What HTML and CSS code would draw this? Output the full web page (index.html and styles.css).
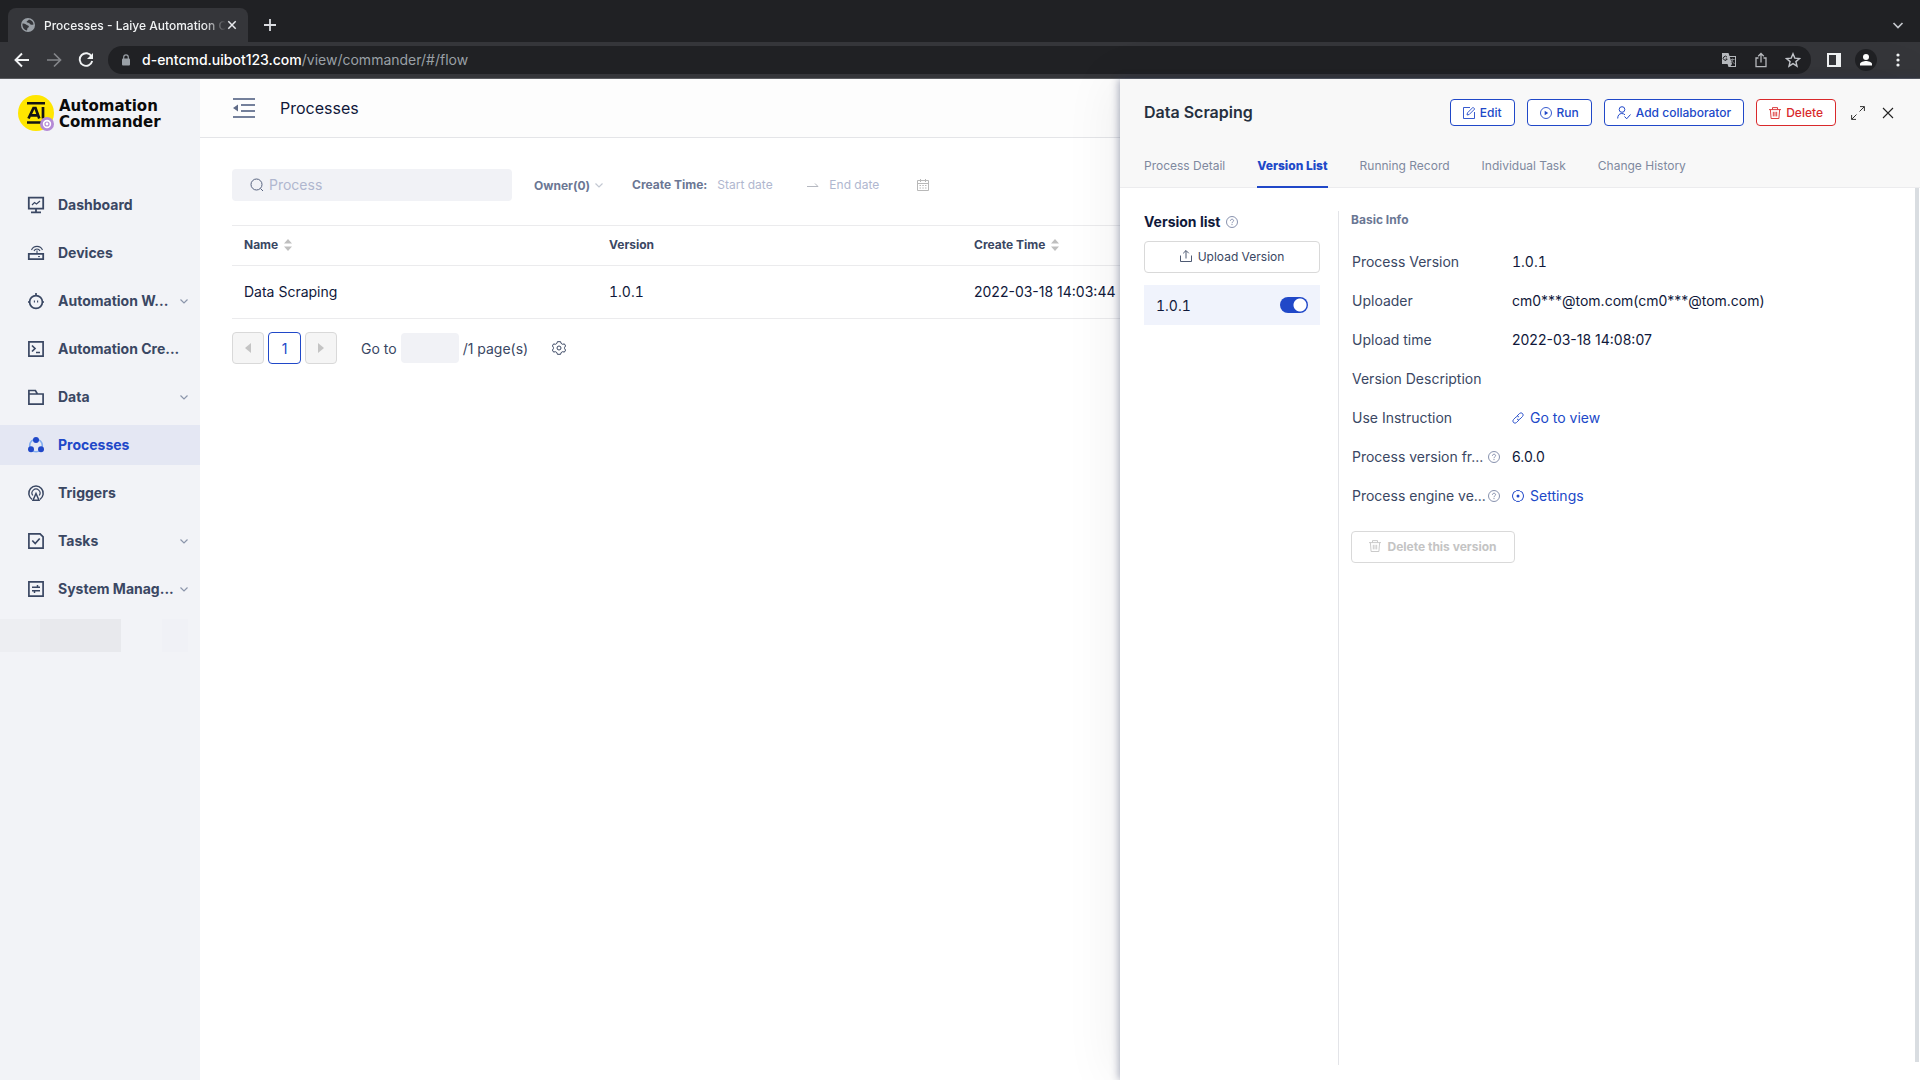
FILE: index.html
```
<!DOCTYPE html>
<html lang="en">
<head>
  <meta charset="UTF-8">
  <meta name="viewport" content="width=device-width, initial-scale=1">
  <title>Processes - Laiye Automation Commander</title>
  <link rel="stylesheet" href="styles.css">
</head>
<body>
  <svg class="sprite" aria-hidden="true">
    <symbol id="chevron" viewBox="0 0 8 8"><path d="M.5 2.500l3.500 3.500 3.500-3.500" fill="none" stroke="currentColor" stroke-width="1.200"/></symbol>
    <symbol id="help" viewBox="0 0 12 12"><g fill="none" stroke="currentColor" stroke-width=".9"><circle cx="6" cy="6" r="5.500"/><path d="M4.400 4.800C4.400 2.700 7.600 2.700 7.600 4.700 7.600 5.800 6 5.800 6 7.200"/></g><circle cx="6" cy="8.600" r=".6" fill="currentColor"/></symbol>
    <symbol id="trash" viewBox="0 0 12 12"><path d="M0 2.600h12M3.500 2.400V.6h5v1.800M1.400 2.800l.7 8.700h7.800l.7-8.700M4.300 4.800v4.600M6 4.800v4.600M7.700 4.800v4.600" fill="none" stroke="currentColor" stroke-width=".9"/></symbol>
    <symbol id="sort" viewBox="0 0 8 14"><path d="M0 5.500L4 1l4 4.500zM0 8.500h8L4 13z" fill="#bfbfbf"/></symbol>
    <symbol id="gear" viewBox="0 0 14 14"><g fill="none" stroke="currentColor"><path d="M5.400.7h3.200l.5 1.700 1.500.9 1.800-.4 1.200 2-1 1.400v1.400l1 1.400-1.200 2-1.800-.4-1.500.9-.5 1.700H5.400l-.5-1.700-1.500-.9-1.800.4-1.200-2 1-1.400V6.300l-1-1.400 1.200-2 1.800.4 1.500-.9z"/><circle cx="7" cy="7" r="2"/></g></symbol>
  </svg>

  <div class="tabbar">
    <div class="tab">
      <svg width="14" height="14" viewBox="0 0 14 14"><circle cx="7" cy="7" r="7" fill="#9aa0a6"/><path d="M1.500 5.500C4 5 5 7 7 7.500c1.500.5 1 2-.5 2.500L6 12.500C3 12 1 9 1.500 5.500zM8 1.500c-1 1.500-2 1-2.500 2.500 1 1 3 .5 3.500 2 1 1 2 1 3.500.5C12.500 4 10.500 2 8 1.500z" fill="#35363a"/></svg>
      <span class="tab-title">Processes - Laiye Automation C</span>
      <button class="tab-close" aria-label="Close tab"><svg width="10" height="10" viewBox="0 0 10 10"><path d="M1.300 1.300l7.400 7.400M8.700 1.300L1.300 8.700" stroke="#e8eaed" stroke-width="1.500"/></svg></button>
    </div>
    <button aria-label="New tab"><svg width="14" height="14" viewBox="0 0 14 14"><path d="M7 1v12M1 7h12" stroke="#dadce0" stroke-width="1.800"/></svg></button>
    <button class="tab-menu" aria-label="Search tabs"><svg width="12" height="12" viewBox="0 0 12 12"><path d="M1.500 4L6 8.500 10.500 4" fill="none" stroke="#c4c7cc" stroke-width="1.700"/></svg></button>
  </div>

  <div class="toolbar">
    <button aria-label="Back"><svg width="16" height="16" viewBox="0 0 16 16"><path d="M15 8H2M8 1.500L1.500 8 8 14.500" fill="none" stroke="#f1f3f4" stroke-width="1.900"/></svg></button>
    <button aria-label="Forward"><svg width="16" height="16" viewBox="0 0 16 16"><path d="M1 8h13M8 1.500L14.500 8 8 14.500" fill="none" stroke="#84868a" stroke-width="1.700"/></svg></button>
    <button aria-label="Reload"><svg width="16" height="16" viewBox="0 0 16 16"><path d="M13.600 4.500A6.300 6.300 0 1 0 14.200 9" fill="none" stroke="#f1f3f4" stroke-width="1.900"/><path d="M15 1v6H9z" fill="#f1f3f4"/></svg></button>
    <div class="omnibox">
      <svg width="10" height="12" viewBox="0 0 10 12"><rect x="1" y="4.500" width="8" height="7" rx="1" fill="#9aa0a6"/><path d="M2.700 5V3.200a2.300 2.300 0 0 1 4.600 0V5" fill="none" stroke="#9aa0a6" stroke-width="1.200"/></svg>
      <div class="url" role="textbox" contenteditable="true" spellcheck="false" aria-label="Address">d-entcmd.uibot123.com<span class="path">/view/commander/#/flow</span></div>
      <button aria-label="Translate"><svg width="16" height="16" viewBox="0 0 16 16"><path d="M1 1h6.500l1 3H15v11H7.500l-1-3H1z" fill="#b8bbbf"/><path d="M8.800 5H14v9H9.600L11 12z" fill="#202124"/><path d="M9.600 7.500h4M11.600 6.500v1c0 1.500-1 2.500-2 3M10.500 8.500c.5 1.500 1.500 2 3 3" fill="none" stroke="#8a8d91"/><path d="M6 5.200A2 2 0 1 0 6.200 7H4.600" fill="none" stroke="#202124"/></svg></button>
      <button aria-label="Share"><svg width="16" height="16" viewBox="0 0 16 16"><path d="M5.500 6H3v8.700h10V6h-2.500M8 10.500V1.800M5.200 4.300L8 1.500l2.800 2.800" fill="none" stroke="#b8bbbf" stroke-width="1.300"/></svg></button>
      <button aria-label="Bookmark"><svg width="16" height="16" viewBox="0 0 16 16"><path d="M8 1.800l1.800 4.300 4.700.4-3.600 3.100 1.100 4.600-4-2.500-4 2.500 1.100-4.600-3.600-3.100 4.700-.4z" fill="none" stroke="#c4c7cc" stroke-width="1.400"/></svg></button>
    </div>
    <div class="tools">
      <button aria-label="Side panel"><svg width="14" height="14" viewBox="0 0 14 14"><path d="M0 0h14v14H0zM2 2v10h7V2z" fill="#f1f3f4" fill-rule="evenodd"/></svg></button>
      <button aria-label="Profile"><svg width="22" height="22" viewBox="0 0 22 22"><circle cx="11" cy="11" r="11" fill="#202124"/><circle cx="11" cy="8" r="3" fill="#fff"/><path d="M5 16.500v-1.500c0-2 4-3 6-3s6 1 6 3v1.500z" fill="#fff"/></svg></button>
      <button class="dots" aria-label="Menu"><svg width="4" height="14" viewBox="0 0 4 14"><g fill="#f1f3f4"><circle cx="2" cy="2" r="1.600"/><circle cx="2" cy="7" r="1.600"/><circle cx="2" cy="12" r="1.600"/></g></svg></button>
    </div>
  </div>

  <div class="app">
    <aside class="sidebar">
      <div class="logo">
        <svg width="37" height="37" viewBox="0 0 37 37"><circle cx="18" cy="18" r="18" fill="#ffe600"/><path d="M9 8.200h18M9 27.500h14" stroke="#141414" stroke-width="2.600"/><path d="M10.500 23.500L15.500 13h2l3.800 10.500M13 20.300h6.500M25 12v11.500" fill="none" stroke="#141414" stroke-width="2.700"/><circle cx="29" cy="29" r="7" fill="#b48ad6"/><circle cx="29" cy="29" r="3.400" fill="none" stroke="#fff" stroke-width="1.600"/><circle cx="29" cy="29" r="1.400" fill="#fff"/></svg>
        <div class="logo-text">Automation<br>Commander</div>
      </div>
      <nav class="nav">
        <a href="#"><svg width="18" height="18" viewBox="0 0 18 18"><g fill="none" stroke="currentColor" stroke-width="1.800"><path d="M1.800 1.700h14.400v11H1.800zM9 13v3M4 16.400h10"/><path d="M5 9l2.500-2.500 2 1.500L13 5" stroke-width="1.200"/></g></svg><span>Dashboard</span></a>
        <a href="#"><svg width="18" height="18" viewBox="0 0 18 18"><g fill="none" stroke="currentColor" stroke-width="1.800"><path d="M1.800 9.900h14.400v5.300H1.800z"/><path d="M10 9V6.500M4.500 6a6 6 0 0 1 11 0M7 7a3.300 3.300 0 0 1 6 0" stroke-width="1.100"/><path d="M11 12.600h2" stroke-width="1"/></g></svg><span>Devices</span></a>
        <a href="#"><svg width="18" height="18" viewBox="0 0 18 18"><g fill="none" stroke="currentColor" stroke-width="1.700"><circle cx="9" cy="10" r="6.400"/><path d="M9 1v3M1 10h2M15 10h2"/><path d="M7.400 8.500v2M10.600 8.500v2" stroke-width="1.100"/></g></svg><span>Automation W...</span><svg class="chev" width="8" height="8"><use href="#chevron"/></svg></a>
        <a href="#"><svg width="18" height="18" viewBox="0 0 18 18"><g fill="none" stroke="currentColor" stroke-width="1.700"><path d="M1.900 1.900h14.200v14.200H1.900zM5 5.500l3 3-3 3M9 12.500h4"/></g></svg><span>Automation Cre...</span></a>
        <a href="#"><svg width="18" height="18" viewBox="0 0 18 18"><path d="M1.900 16.100V2.500h6.500l2 3.500h5.700v10.100zM2 6h9" fill="none" stroke="currentColor" stroke-width="1.700"/></svg><span>Data</span><svg class="chev" width="8" height="8"><use href="#chevron"/></svg></a>
        <a href="#" class="active" aria-current="page"><svg width="18" height="18" viewBox="0 0 18 18"><circle cx="9" cy="9.500" r="6.300" fill="none" stroke="#82aef0" stroke-width="1.600"/><g fill="currentColor"><circle cx="9" cy="4" r="3"/><circle cx="4" cy="13.200" r="3"/><circle cx="14" cy="13.200" r="3"/></g></svg><span>Processes</span></a>
        <a href="#"><svg width="18" height="18" viewBox="0 0 18 18"><g fill="none" stroke="currentColor" stroke-width="1.500"><path d="M5 15.300a7.200 7.200 0 1 1 8 0"/><path d="M5.800 11.500a4 4 0 1 1 6.400 0" stroke-width="1.200"/><path d="M9 9.500l-3 6.700h6z"/></g></svg><span>Triggers</span></a>
        <a href="#"><svg width="18" height="18" viewBox="0 0 18 18"><path d="M1.900 1.900h11.200l3 3v11.200H1.900zM5.300 8.500l2.900 3 4.500-5" fill="none" stroke="currentColor" stroke-width="1.700"/></svg><span>Tasks</span><svg class="chev" width="8" height="8"><use href="#chevron"/></svg></a>
        <a href="#"><svg width="18" height="18" viewBox="0 0 18 18"><g fill="none" stroke="currentColor" stroke-width="1.700"><path d="M1.900 1.900h14.200v14.200H1.900z"/><path d="M5 7.200h8M10.500 5v2.200M5 10.800h8M7.500 10.800V13" stroke-width="1.500"/></g></svg><span>System Manag...</span><svg class="chev" width="8" height="8"><use href="#chevron"/></svg></a>
      </nav>
      <div class="masked"><i class="pale"></i><i class="dark"></i><i class="faint"></i></div>
    </aside>

    <main class="main">
      <header class="page-head">
        <button aria-label="Collapse menu"><svg width="22" height="20" viewBox="0 0 22 20"><path d="M0 1h22M8 7h14M8 13h14M0 19h22" stroke="#74809b" stroke-width="1.900"/><path d="M5 6.500v7L0 10z" fill="#5f6b87"/></svg></button>
        <h1>Processes</h1>
      </header>
      <section class="content">
        <div class="filters">
          <label class="search">
            <svg width="14" height="14" viewBox="0 0 14 14"><circle cx="6.500" cy="6.500" r="5.500" fill="none" stroke="#57637f"/><path d="M10.500 10.500L13 13" stroke="#57637f"/></svg>
            <input type="text" placeholder="Process" aria-label="Process">
          </label>
          <label class="owner">
            <select aria-label="Owner"><option>Owner(0)</option></select>
            <svg width="8" height="8"><use href="#chevron"/></svg>
          </label>
          <div class="dates">
            <label for="start">Create Time:</label>
            <input id="start" type="text" placeholder="Start date">
            <svg width="12" height="8" viewBox="0 0 12 8"><path d="M0 5.500h11L8 2.500" fill="none" stroke="#b5b8c0"/></svg>
            <input type="text" placeholder="End date" aria-label="End date">
            <svg width="12" height="12" viewBox="0 0 12 12"><path d="M.5 1.500h11v10H.5zM.5 4.500h11M3.500 0v3M8.500 0v3M2.500 6.500H4M5.300 6.500h1.500M8 6.500h1.500M2.500 9H4M5.300 9h1.500M8 9h1.500" fill="none" stroke="#b8b8b8"/></svg>
          </div>
        </div>
        <table>
          <colgroup><col class="col"><col class="col"><col class="col"><col></colgroup>
          <thead>
            <tr>
              <th>Name <svg class="sort" width="8" height="14"><use href="#sort"/></svg></th>
              <th>Version</th>
              <th>Create Time <svg class="sort" width="8" height="14"><use href="#sort"/></svg></th>
              <th></th>
            </tr>
          </thead>
          <tbody>
            <tr><td>Data Scraping</td><td class="num">1.0.1</td><td>2022-03-18 14:03:44</td><td></td></tr>
          </tbody>
        </table>
        <div class="pager">
          <button disabled aria-label="Previous page"><svg width="6" height="10" viewBox="0 0 6 10"><path d="M6 0v10L0 5z" fill="#c4c4c4"/></svg></button>
          <button class="current">1</button>
          <button disabled aria-label="Next page"><svg width="6" height="10" viewBox="0 0 6 10"><path d="M0 0v10l6-5z" fill="#c4c4c4"/></svg></button>
          <label for="goto">Go to</label>
          <input id="goto" type="text">
          <span>/1 page(s)</span>
          <a href="#" aria-label="Table settings"><svg width="14" height="14"><use href="#gear"/></svg></a>
        </div>
      </section>
    </main>

    <section class="drawer">
      <header class="drawer-head">
        <div class="drawer-title">
          <h2>Data Scraping</h2>
          <button class="btn"><svg width="12" height="12" viewBox="0 0 12 12"><path d="M7 .5H.5v11h11V5M4 8l.5-2.200L10 .3l1.700 1.700L6.200 7.500z" fill="none" stroke="currentColor" stroke-width=".9"/></svg>Edit</button>
          <button class="btn"><svg width="12" height="12" viewBox="0 0 12 12"><circle cx="6" cy="6" r="5.500" fill="none" stroke="currentColor" stroke-width=".9"/><path d="M4.700 3.800v4.400L8.200 6z" fill="currentColor"/></svg>Run</button>
          <button class="btn"><svg width="14" height="14" viewBox="0 0 14 14"><path d="M.7 12.500c0-3 1.500-5 4-5 1.500 0 2.500.5 3.300 1.300M7.500 10.500l2.200 2.300L13.500 8.500" fill="none" stroke="currentColor"/><circle cx="5" cy="3.500" r="2.800" fill="none" stroke="currentColor"/></svg>Add collaborator</button>
          <button class="btn danger"><svg width="12" height="12"><use href="#trash"/></svg>Delete</button>
          <button class="expand" aria-label="Expand"><svg width="14" height="14" viewBox="0 0 14 14"><path d="M8.500 5.500L13.300.7M9 .6h4.400V5M5.500 8.500L.7 13.300M.6 9v4.400H5" fill="none" stroke="#333"/></svg></button>
          <button aria-label="Close"><svg width="12" height="12" viewBox="0 0 12 12"><path d="M1 1l10 10M11 1L1 11" stroke="#222" stroke-width="1.100"/></svg></button>
        </div>
        <div class="tabs" role="tablist">
          <button role="tab">Process Detail</button>
          <button role="tab" class="on" aria-selected="true">Version List</button>
          <button role="tab">Running Record</button>
          <button role="tab">Individual Task</button>
          <button role="tab">Change History</button>
        </div>
      </header>
      <div class="drawer-body">
        <div class="versions">
          <h3>Version list <svg width="12" height="12"><use href="#help"/></svg></h3>
          <button class="upload"><svg width="12" height="12" viewBox="0 0 12 12"><path d="M.5 5.500v6h11v-6M6 8.500V.8M3.200 3.300L6 .5l2.800 2.800" fill="none" stroke="currentColor" stroke-width=".9"/></svg>Upload Version</button>
          <label class="version num">1.0.1 <input type="checkbox" checked></label>
        </div>
        <div class="info">
          <h4>Basic Info</h4>
          <dl>
            <div><dt>Process Version</dt><dd class="num">1.0.1</dd></div>
            <div><dt>Uploader</dt><dd>cm0***@tom.com(cm0***@tom.com)</dd></div>
            <div><dt>Upload time</dt><dd>2022-03-18 14:08:07</dd></div>
            <div><dt>Version Description</dt><dd></dd></div>
            <div><dt>Use Instruction</dt><dd><a href="#"><svg width="12" height="12" viewBox="0 0 12 12"><path d="M5 4l2.500-2.500a2 2 0 0 1 3 3L8 7a2 2 0 0 1-3 0M7 8l-2.500 2.500a2 2 0 0 1-3-3L4 5a2 2 0 0 1 3 0" fill="none" stroke="currentColor" stroke-width=".9"/></svg>Go to view</a></dd></div>
            <div><dt>Process version fr... <svg width="12" height="12"><use href="#help"/></svg></dt><dd>6.0.0</dd></div>
            <div><dt>Process engine ve... <svg width="12" height="12"><use href="#help"/></svg></dt><dd><a href="#"><svg width="12" height="12" viewBox="0 0 12 12"><path d="M4.500.6h3l1 .9 1.700.6L11.400 5v2l-1.200 2.900-1.700.6-1 .9h-3l-1-.9-1.700-.6L.6 7V5l1.200-2.900 1.700-.6z" fill="none" stroke="currentColor"/><circle cx="6" cy="6" r="1.500" fill="currentColor"/></svg>Settings</a></dd></div>
          </dl>
          <button class="remove" disabled><svg width="12" height="12"><use href="#trash"/></svg>Delete this version</button>
        </div>
        <div class="scrollbar"></div>
      </div>
    </section>
  </div>
</body>
</html>
```
FILE: styles.css
```
* {
  box-sizing: border-box;
}
body {
  margin: 0;
  height: 100vh;
  display: flex;
  flex-direction: column;
  overflow: hidden;
  font-family: Inter, "Liberation Sans", sans-serif;
  font-size: 14px;
  color: #10183a;
  background: #fff;
}
h1, h2, h3, h4, dl, dd {
  margin: 0;
}
button, input, select {
  font: inherit;
  color: inherit;
  border: none;
  background: none;
  padding: 0;
  margin: 0;
}
button {
  display: flex;
  align-items: center;
  justify-content: center;
}
a {
  color: inherit;
  text-decoration: none;
}
svg {
  flex: none;
}
.num {
  font-variant-numeric: tabular-nums;
}
.sprite {
  position: absolute;
  width: 0;
  height: 0;
}

/* browser */
.tabbar {
  display: flex;
  align-items: center;
  height: 42px;
  padding: 0 16px 0 8px;
  background: #202124;
}
.tabbar button {
  margin-top: 8px;
}
.tab {
  display: flex;
  align-items: center;
  align-self: flex-end;
  width: 240px;
  height: 34px;
  margin-right: 15px;
  padding: 0 11px 0 13px;
  border-radius: 8px 8px 0 0;
  background: #35363a;
}
.tab-title {
  flex: 1;
  min-width: 0;
  margin: 0 0 0 9px;
  white-space: nowrap;
  font-size: 12px;
  font-weight: 500;
  color: #f1f3f4;
  mask-image: linear-gradient(to right, #000 160px, transparent 182px);
}
.tabbar .tab-close {
  margin-top: 0;
}
.tabbar .tab-menu {
  margin-left: auto;
}
.toolbar {
  display: flex;
  align-items: center;
  height: 37px;
  gap: 16px;
  padding: 0 20px 1px 14px;
  background: #35363a;
  border-bottom: 1px solid #5a5c60;
}
.omnibox {
  flex: 1;
  display: flex;
  align-items: center;
  gap: 16px;
  height: 28px;
  margin-left: -2px;
  padding: 0 10px 0 13px;
  border-radius: 14px;
  background: #202124;
}
.url {
  flex: 1;
  margin-left: -5px;
  font-weight: 500;
  color: #fff;
  outline: none;
}
.path {
  font-weight: 400;
  color: #9aa0a6;
}
.tools {
  display: flex;
  align-items: center;
  gap: 14px;
}
.tools .dots {
  margin-left: 5px;
}

/* page */
.app {
  position: relative;
  flex: 1;
  display: flex;
  min-height: 0;
}
.sidebar {
  width: 200px;
  background: #f2f3f7;
}
.logo {
  display: flex;
  align-items: center;
  gap: 4px;
  padding: 16px 0 0 18px;
}
.logo-text {
  font-family: "DejaVu Sans", sans-serif;
  font-size: 15px;
  line-height: 16px;
  font-weight: bold;
  color: #0a0a0a;
}
.nav {
  display: flex;
  flex-direction: column;
  gap: 8px;
  margin-top: 53px;
}
.nav a {
  display: flex;
  align-items: center;
  height: 40px;
  padding: 0 12px 0 27px;
  font-weight: 700;
  color: #3a4763;
}
.nav span {
  flex: 1;
  margin-left: 13px;
  padding-bottom: 1px;
  white-space: nowrap;
}
.nav .chev {
  color: #8c96ab;
}
.nav .active {
  background: #e4e7f3;
  color: #2048c8;
}
.masked {
  display: flex;
  margin-top: 10px;
  height: 33px;
}
.masked .pale {
  width: 40px;
  background: #edeef2;
}
.masked .dark {
  width: 81px;
  background: #e8e9ed;
}
.masked .faint {
  width: 26px;
  margin-left: 41px;
  background: #f0f1f6;
}
.main {
  flex: 1;
  min-width: 0;
}
.page-head {
  display: flex;
  align-items: center;
  gap: 25px;
  height: 59px;
  padding-left: 33px;
  border-bottom: 1px solid #e4e5e8;
  background: #fdfdfd;
}
.page-head h1 {
  font-size: 16px;
  font-weight: 400;
}
.content {
  padding: 31px 32px;
}
.filters {
  display: flex;
  align-items: center;
  font-size: 12px;
}
.search {
  display: flex;
  align-items: center;
  gap: 5px;
  width: 280px;
  height: 32px;
  padding-left: 18px;
  border-radius: 4px;
  background: #f1f2f6;
  font-size: 14px;
}
.filters input, .dates label {
  padding-bottom: 2px;
}
::placeholder {
  color: #b0b7cf;
  opacity: 1;
}
.owner {
  display: flex;
  align-items: center;
  gap: 4px;
  margin: 0 29px 0 22px;
  color: #c3c8d2;
}
.owner select {
  appearance: none;
  font-weight: 700;
  color: #6b7794;
}
.dates {
  display: flex;
  align-items: center;
}
.dates label {
  margin-right: 10px;
  font-weight: 700;
  color: #6b7794;
}
.dates input {
  width: 80px;
  margin-right: 10px;
}
.dates svg {
  margin-right: 10px;
}
.dates input:last-of-type {
  width: 78px;
}
table {
  width: 100%;
  margin-top: 24px;
  border-collapse: collapse;
  table-layout: fixed;
  border-top: 1px solid #ebebed;
}
.col {
  width: 365px;
}
th, td {
  padding: 0 12px 2px;
  text-align: left;
  border-bottom: 1px solid #ebebed;
  white-space: nowrap;
}
th {
  height: 40px;
  font-size: 12px;
  font-weight: 700;
  color: #3a4763;
}
td {
  height: 53px;
}
.sort {
  margin-left: 3px;
  vertical-align: middle;
}
.pager {
  display: flex;
  align-items: center;
  gap: 4px;
  margin-top: 13px;
  color: #3a4763;
}
.pager button {
  width: 32px;
  height: 32px;
  border: 1px solid #d9d9d9;
  border-radius: 4px;
  background: #f5f5f5;
}
.pager .current {
  width: 33px;
  border-color: #2048c8;
  background: #fff;
  color: #2048c8;
}
.pager label {
  margin-left: 20px;
}
.pager input {
  width: 58px;
  height: 30px;
  border-radius: 4px;
  background: #f1f2f6;
}
.pager a {
  display: flex;
  margin-left: 20px;
}

/* drawer */
.drawer {
  position: absolute;
  top: 0;
  right: 0;
  bottom: 0;
  width: 800px;
  display: flex;
  flex-direction: column;
  background: #fff;
  box-shadow: -1px 0 8px rgba(40, 50, 90, .4), -8px 0 50px rgba(0, 0, 0, .06);
}
.drawer-head {
  padding: 20px 26px 0 24px;
  border-bottom: 1px solid #ececee;
  background: #f8f8f8;
}
.drawer-title {
  display: flex;
  align-items: center;
  gap: 12px;
}
.drawer-title h2 {
  flex: 1;
  padding-bottom: 2px;
  font-size: 16px;
  font-weight: 600;
  color: #26303f;
}
.btn {
  gap: 5px;
  height: 27px;
  padding: 0 12px;
  border: 1px solid #2048c8;
  border-radius: 4px;
  background: #fff;
  font-size: 12px;
  font-weight: 500;
  color: #2048c8;
}
.danger {
  border-color: #d9292b;
  color: #d9292b;
}
.expand {
  margin: 0 5px 0 3px;
}
.tabs {
  display: flex;
  gap: 32px;
  margin: 20px 0 -1px;
  height: 42px;
}
.tabs button {
  padding-bottom: 2px;
  border-bottom: 2px solid transparent;
  font-size: 12px;
  color: #7f899f;
}
.tabs .on {
  border-color: #2048c8;
  color: #2048c8;
  font-weight: 800;
}
.drawer-body {
  flex: 1;
  display: flex;
  padding: 23px 1px 15px 24px;
}
.versions {
  width: 176px;
  padding-top: 2px;
}
.versions h3 {
  display: flex;
  align-items: center;
  gap: 6px;
  margin-bottom: 10px;
  font-size: 14px;
  line-height: 18px;
  font-weight: 700;
}
h3 svg, dt svg {
  color: #7b86a5;
}
.upload, .remove {
  gap: 6px;
  height: 32px;
  padding-bottom: 2px;
  border: 1px solid #d9d9d9;
  border-radius: 4px;
  font-size: 12px;
  color: #3a4763;
}
.upload {
  width: 100%;
}
.version {
  display: flex;
  align-items: center;
  justify-content: space-between;
  height: 40px;
  margin-top: 12px;
  padding: 0 12px;
  background: #f0f3fc;
}
.version input {
  appearance: none;
  width: 28px;
  height: 16px;
  border-radius: 8px;
  background: radial-gradient(circle at 20px 8px, #fff 6px, #2048c8 7px);
}
.info {
  flex: 1;
  margin-left: 18px;
  padding-left: 12px;
  border-left: 1px solid #e3e4e8;
}
.info h4 {
  font-size: 12px;
  line-height: 18px;
  font-weight: 700;
  color: #6b7794;
}
.info dl {
  margin-top: 13px;
  padding-left: 1px;
}
.info dl div {
  display: flex;
  align-items: center;
  height: 39px;
}
dt {
  display: flex;
  align-items: center;
  justify-content: space-between;
  width: 148px;
  margin-right: 12px;
  color: #3a4763;
}
dd a {
  display: flex;
  align-items: center;
  gap: 6px;
  color: #2048c8;
}
.remove {
  width: 164px;
  margin-top: 16px;
  font-weight: 700;
  color: #c4c4c4;
}
.scrollbar {
  width: 4px;
  margin: -23px 0 3px;
  background: #d9dde1;
}
```
